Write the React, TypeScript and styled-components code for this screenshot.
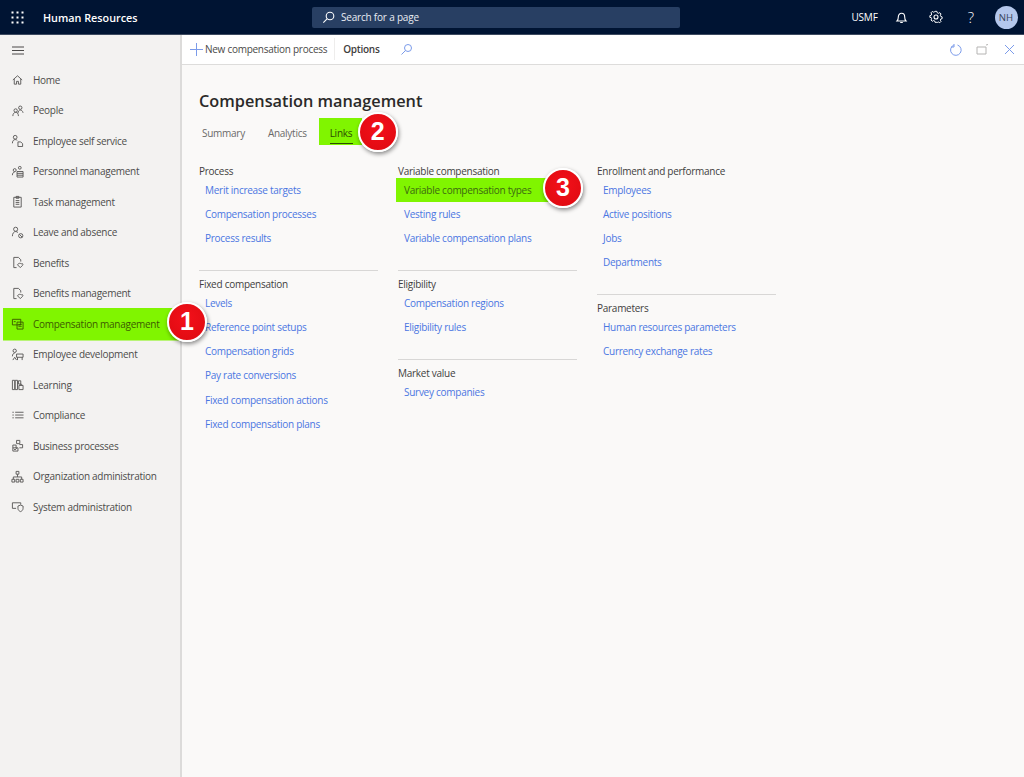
import React from "react";
import styled, { createGlobalStyle } from "styled-components";

const Global = createGlobalStyle`
  html, body { margin: 0; padding: 0; height: 100%; }
  body { font-family: "Open Sans", "Noto Sans", "Liberation Sans", sans-serif; background: #faf9f8; }
  #root { height: 777px; }
  * { box-sizing: border-box; }
`;

const Page = styled.div`
  width: 1024px; height: 777px; display: flex; flex-direction: column; overflow: hidden;
`;
const TopBar = styled.header`
  height: 35px; flex: none; background: #001433; color: #fff; display: flex; align-items: center;
  padding: 0 0 0 11px; border-bottom: 1px solid #3d4a60;
`;
const Waffle = styled.svg`width: 13px; height: 13px; fill: #fff; flex: none;`;
const AppName = styled.div`
  font-size: 10.8px; font-weight: 600; margin-left: 19px; width: 269px; white-space: nowrap;
`;
const SearchBox = styled.div`
  width: 368px; height: 21px; background: #283f63; border-radius: 2px; display: flex; align-items: center;
  padding-left: 10px; gap: 6px; font-size: 10px; letter-spacing: -0.2px; color: #e8ecf2;
`;
const TopRight = styled.div`
  margin-left: auto; display: flex; align-items: center; color: #fff;
`;
const Company = styled.div`font-size: 10px; letter-spacing: -0.2px; width: 32px; margin-right: 0;`;
const TopIcon = styled.div`
  width: 35px; display: flex; justify-content: center; align-items: center; font-size: 15px; font-weight: 300;
`;
const Avatar = styled.div`
  width: 23px; height: 23px; border-radius: 50%; background: #b4c7ec; color: #39445a; font-size: 9.6px;
  display: flex; align-items: center; justify-content: center; margin: 0 6.500px 0 6px;
`;
const Body = styled.div`flex: 1; display: flex; min-height: 0;`;
const Sidebar = styled.nav`
  width: 182px; flex: none; background: #f3f2f1; border-right: 2px solid #dcdbda; padding: 8px 0 0 0;
  display: flex; flex-direction: column;
`;
const Burger = styled.div`
  height: 15px; padding-left: 11.5px; margin-bottom: 6.5px; display: flex; align-items: center;
`;
const NavItem = styled.div<{ $on?: boolean }>`
  position: relative; height: 30.5px; display: flex; align-items: center; flex: none;
  margin-left: 3px; padding-left: 8px; gap: 9px; width: 177px;
  font-size: 10px; letter-spacing: -0.27px; white-space: nowrap;
  color: ${(p) => (p.$on ? "#3c5a00" : "#4d4c4b")};
  background: ${(p) => (p.$on ? "#80f500" : "transparent")};
  box-shadow: ${(p) => (p.$on ? "0 1.5px 0 #80f500, 0 -1px 0 #80f500" : "none")};
`;
const NavGlyph = styled.svg<{ $on?: boolean }>`
  width: 13px; height: 13px; flex: none; fill: none; stroke: ${(p) => (p.$on ? "#3c5a00" : "#5a5958")}; stroke-width: 1;
`;
const Content = styled.main`flex: 1; min-width: 0; display: flex; flex-direction: column; background: #faf9f8;`;
const CommandBar = styled.div`
  height: 29.5px; flex: none; background: #fff; border-bottom: 1px solid #dddcdb; display: flex; align-items: center;
  font-size: 10px; letter-spacing: -0.27px; color: #4a4948; padding-left: 8px;
`;
const CmdAction = styled.div`
  display: flex; align-items: center; gap: 2px; height: 22px; padding-right: 7px; border-right: 1px solid #eeedec; white-space: nowrap;
`;
const CmdOptions = styled.div`font-weight: 600; color: #3e3d3c; margin-left: 8px; margin-right: 20px;`;
const CmdRight = styled.div`margin-left: auto; display: flex; align-items: center; gap: 14px; padding-right: 8px;`;
const Line = styled.svg`width: 13px; height: 13px; fill: none; stroke: #7b9bea; stroke-width: 1; flex: none;`;
const Main = styled.div`padding: 24px 0 0 17px;`;
const Title = styled.h1`
  margin: 0; font-size: 16.3px; line-height: 24px; font-weight: 600; color: #2b2a29; white-space: nowrap;
`;
const Tabs = styled.div`display: flex; margin: 5.5px 0 0 0; height: 27px; align-items: stretch;`;
const Tab = styled.div<{ $on?: boolean }>`
  position: relative; display: flex; align-items: center; font-size: 10px; letter-spacing: -0.27px; white-space: nowrap;
  color: ${(p) => (p.$on ? "#2c4c00" : "#6a6968")};
  background: ${(p) => (p.$on ? "#80f500" : "transparent")};
  padding: ${(p) => (p.$on ? "2px 10px 0 11px" : "2px 0 0 3px")};
  margin-right: ${(p) => (p.$on ? "0" : "23px")};
  &:nth-child(2) { margin-right: 12px; padding-left: 0; }
`;
const TabLine = styled.span`
  position: absolute; left: 11px; bottom: 1px; width: 23px; height: 1.5px; background: #2c4c00;
`;
const Columns = styled.div`display: flex; gap: 20px; margin-top: 18.5px; align-items: flex-start;`;
const Column = styled.div`width: 179px; display: flex; flex-direction: column;`;
const Section = styled.section`
  padding-bottom: 7px;
  & + & { border-top: 1px solid #d8d7d6; padding-top: 6px; margin-top: 12.7px; }
`;
const SectionTitle = styled.div`
  font-size: 10px; letter-spacing: -0.27px; line-height: 14px; color: #3f3e3d; white-space: nowrap;
`;
const LinkRow = styled.a<{ $on?: boolean }>`
  position: relative; display: flex; align-items: center; height: 24.2px; white-space: nowrap;
  font-size: 10px; letter-spacing: -0.27px; padding-left: ${(p) => (p.$on ? "8px" : "6px")};
  color: ${(p) => (p.$on ? "#3c6a10" : "#4a76e2")};
  background: ${(p) => (p.$on ? "#80f500" : "transparent")};
  margin-left: ${(p) => (p.$on ? "-2px" : "0")};
  width: ${(p) => (p.$on ? "165px" : "auto")};
`;
const Badge = styled.div`
  position: absolute; width: 40px; height: 40px; border-radius: 50%;
  background: radial-gradient(circle at 50% 40%, #f3101a, #dd0a10);
  border: 2px solid #fff; box-shadow: 1px 2px 4px rgba(0,0,0,.45);
  color: #fff; font: 700 25px/35px "Liberation Sans", Arial, sans-serif; letter-spacing: 0; text-align: center; z-index: 3;
`;
const BadgeNav = styled(Badge)`left: 164px; top: -7px;`;
const BadgeTab = styled(Badge)`left: 39px; top: -6px;`;
const BadgeLink = styled(Badge)`left: 147px; top: -10px;`;

const glyphs: Record<string, React.ReactNode> = {
  home: <path d="M2 7.5 7 3l5 4.5M3.5 6.5V12h2.5V9h2v3h2.500V6.500" />,
  people: <><circle cx="10" cy="4" r="1.800" /><path d="M7.500 10c0-2 1-3.500 2.500-3.500s2.500 1 3 3" /><circle cx="5" cy="7" r="1.800" /><path d="M2 13c0-2.500 1.300-4 3-4s3 1.500 3 4" /></>,
  self: <><circle cx="4.500" cy="3.500" r="2" /><path d="M1.500 10c0-2.500 1.300-4 3-4 1 0 1.800.4 2.300 1" /><path d="M7.500 8.500h3l2 2v3h-5z" /></>,
  personnel: <><circle cx="4" cy="5.500" r="1.600" /><path d="M1.500 11c0-2 1-3.500 2.500-3.500" /><circle cx="9.500" cy="3" r="1.500" /><path d="M6.500 7h6.500v6H6.500zM6.500 9h6.500M6.500 11h6.500" /></>,
  task: <path d="M3 2.500h8v10.500H3zM5.500 1.500h3v2h-3zM5 6h4M5 8h4M5 10h4" />,
  leave: <><circle cx="5" cy="3.500" r="2.200" /><path d="M1.500 11c0-3 1.500-5 3.500-5 1 0 1.800.4 2.500 1" /><circle cx="10.500" cy="10.500" r="2.300" /><path d="m9 9 3 3" /></>,
  benefits: <><path d="M3 12.500V1.500h5l2.500 2.500v2M3 12.500h3" /><path d="M7 9.500c1-2 3-2 4-1 1-1 2.500 0 1.500 1.500L10 12.500z" /></>,
  comp: <><path d="M1.500 2.500h9v6h-9z" /><path d="M6.500 5.500h6.500v7.500H6.500zM3 5h2M8 8h3.500M8 10h3.500" /></>,
  dev: <><circle cx="4" cy="3" r="1.800" /><path d="M1.500 9c0-2 1-3.500 2.500-3.500M6 6.500h7v3.500H6zM7 10v3M12 10v3M2 13l2-3 2 3" /></>,
  learning: <path d="M1.500 2.500h2.500v10H1.500zM4.500 2.500H7v10H4.500zM8 3h2.500v3.500H8zM8.500 8h4.500v4.500H8.500zM10 8V6.800h1.500V8" />,
  compliance: <path d="M1.500 3.500h1.500M1.500 6.500h1.500M1.500 9.500h1.500M4.500 3.500h9M4.500 6.500h9M4.500 9.500h9" />,
  process: <path d="M6 1.500h3.500V5H6zM2 6.500h3.500V10M2 6.500V13h5.500V9.500H2M9 6h3.500v3.500H9M3 10.500l1.300 1.300 2-2" />,
  org: <path d="M5.500 1.500h3v3h-3zM7 4.500v3M2.500 10V7.500h9V10M1 10h3v3H1zM5.500 10h3v3h-3zM10 10h3v3h-3z" />,
  system: <path d="M1.500 3h9v2M1.500 3v6h4M7.500 6.500l2.800-1 2.700 1v2.500c0 2-1.500 3-2.700 3.500C9 12 7.500 11 7.500 9z" />,
};

const navItems: [string, string, boolean?][] = [
  ["Home", "home"], ["People", "people"], ["Employee self service", "self"], ["Personnel management", "personnel"],
  ["Task management", "task"], ["Leave and absence", "leave"], ["Benefits", "benefits"], ["Benefits management", "benefits"],
  ["Compensation management", "comp", true], ["Employee development", "dev"], ["Learning", "learning"], ["Compliance", "compliance"],
  ["Business processes", "process"], ["Organization administration", "org"], ["System administration", "system"],
];

type Sec = { title: string; links: string[] };
const columns: Sec[][] = [
  [
    { title: "Process", links: ["Merit increase targets", "Compensation processes", "Process results"] },
    { title: "Fixed compensation", links: ["Levels", "Reference point setups", "Compensation grids", "Pay rate conversions", "Fixed compensation actions", "Fixed compensation plans"] },
  ],
  [
    { title: "Variable compensation", links: ["Variable compensation types", "Vesting rules", "Variable compensation plans"] },
    { title: "Eligibility", links: ["Compensation regions", "Eligibility rules"] },
    { title: "Market value", links: ["Survey companies"] },
  ],
  [
    { title: "Enrollment and performance", links: ["Employees", "Active positions", "Jobs", "Departments"] },
    { title: "Parameters", links: ["Human resources parameters", "Currency exchange rates"] },
  ],
];

const dots = [1.5, 6.5, 11.5];

export default function App() {
  return (
    <Page>
      <Global />
      <TopBar>
        <Waffle viewBox="0 0 13 13">
          {dots.flatMap((y) => dots.map((x) => <rect key={`${x}-${y}`} x={x - 1} y={y - 1} width="2" height="2" />))}
        </Waffle>
        <AppName>Human Resources</AppName>
        <SearchBox>
          <svg width="13" height="13" viewBox="0 0 13 13" fill="none" stroke="#fff" strokeWidth="1.100">
            <circle cx="8" cy="5" r="3.800" /><path d="M5.300 7.700 1.300 11.700" />
          </svg>
          Search for a page
        </SearchBox>
        <TopRight>
          <Company>USMF</Company>
          <TopIcon>
            <svg width="13" height="13" viewBox="0 0 13 13" fill="none" stroke="#fff" strokeWidth="1.100">
              <path d="M2 10h9c-1-1-1.300-2-1.300-4 0-2-1.300-3.800-3.200-3.800S3.300 4 3.300 6c0 2-.3 3-1.300 4zM5.200 11.500h2.600" />
            </svg>
          </TopIcon>
          <TopIcon>
            <svg width="14" height="14" viewBox="0 0 14 14" fill="none" stroke="#fff" strokeWidth="1.100">
              <circle cx="7" cy="7" r="2" />
              <path d="M6 1.300h2l.4 1.600 1.300.6 1.500-.8 1.400 1.500-.8 1.400.5 1.300 1.500.5v2l-1.500.4-.5 1.300.8 1.400-1.400 1.400-1.500-.8-1.300.5L8 13.500H6l-.4-1.500-1.300-.5-1.500.8-1.400-1.400.8-1.400-.5-1.300L.2 8V6l1.500-.4.500-1.300-.8-1.400 1.400-1.500 1.500.8 1.300-.6z" transform="translate(.7 .2) scale(.9)" />
            </svg>
          </TopIcon>
          <TopIcon>?</TopIcon>
          <Avatar>NH</Avatar>
        </TopRight>
      </TopBar>
      <Body>
        <Sidebar>
          <Burger>
            <svg width="12" height="9" viewBox="0 0 12 9" stroke="#4a4948" strokeWidth="1"><path d="M0 1h12M0 4.500h12M0 8h12" /></svg>
          </Burger>
          {navItems.map(([label, g, on]) => (
            <NavItem key={label} $on={on}>
              <NavGlyph viewBox="0 0 14 14" $on={on}>{glyphs[g]}</NavGlyph>
              {label}
              {on && <BadgeNav>1</BadgeNav>}
            </NavItem>
          ))}
        </Sidebar>
        <Content>
          <CommandBar>
            <CmdAction>
              <Line viewBox="0 0 13 13"><path d="M6.500 0v13M0 6.500h13" /></Line>
              New compensation process
            </CmdAction>
            <CmdOptions>Options</CmdOptions>
            <Line viewBox="0 0 13 13"><circle cx="8" cy="5" r="3.500" /><path d="M5.500 7.500 1.500 11.500" /></Line>
            <CmdRight>
              <Line viewBox="0 0 13 13"><path d="M8 1.500a5.300 5.300 0 1 1-3.800.2M4.500.5v3H1.500" transform="translate(.5 .5)" /></Line>
              <Line viewBox="0 0 13 13" style={{ stroke: "#b5b4b3" }}><path d="M1 4h9v7H1zM10 2l2-.5" /></Line>
              <Line viewBox="0 0 13 13"><path d="m2 2 9 9M11 2l-9 9" /></Line>
            </CmdRight>
          </CommandBar>
          <Main>
            <Title>Compensation management</Title>
            <Tabs>
              <Tab>Summary</Tab>
              <Tab>Analytics</Tab>
              <Tab $on>Links<TabLine /><BadgeTab>2</BadgeTab></Tab>
            </Tabs>
            <Columns>
              {columns.map((col, i) => (
                <Column key={i}>
                  {col.map((s) => (
                    <Section key={s.title}>
                      <SectionTitle>{s.title}</SectionTitle>
                      {s.links.map((l) => {
                        const on = l === "Variable compensation types";
                        return (
                          <LinkRow key={l} $on={on}>
                            {l}
                            {on && <BadgeLink>3</BadgeLink>}
                          </LinkRow>
                        );
                      })}
                    </Section>
                  ))}
                </Column>
              ))}
            </Columns>
          </Main>
        </Content>
      </Body>
    </Page>
  );
}
